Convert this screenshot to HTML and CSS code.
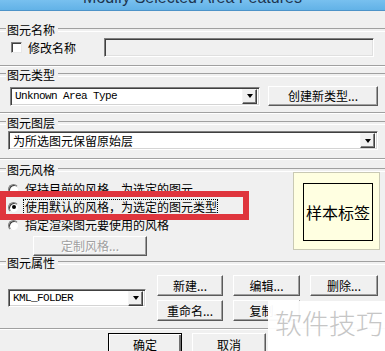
FILE: index.html
```html
<!DOCTYPE html>
<html>
<head>
<meta charset="utf-8">
<link rel="stylesheet" href="styles.css">
</head>
<body>
<div class="titlebar"><span class="title">Modify Selected Area Features</span></div>

<section class="group boxed g1">
  <div class="ghead"><span>图元名称</span></div>
  <div class="row name-row">
    <span class="check"><span class="cbox"></span>修改名称</span>
    <div class="textbox"></div>
  </div>
</section>

<section class="group boxed g2">
  <div class="ghead"><span>图元类型</span></div>
  <div class="row type-row">
    <div class="combo mono w-type"><span class="ctext">Unknown Area Type</span><span class="arrow"></span></div>
    <button class="btn w-create">创建新类型...</button>
  </div>
</section>

<section class="group boxed g3">
  <div class="ghead"><span>图元图层</span></div>
  <div class="row layer-row">
    <div class="combo w-layer"><span class="ctext">为所选图元保留原始层</span><span class="arrow"></span></div>
  </div>
</section>

<section class="group g4">
  <div class="ghead"><span>图元风格</span></div>
  <div class="style-body">
    <div class="radios">
      <div class="radio"><span class="rdot"></span><span>保持目前的风格，为选定的图元</span></div>
      <div class="radio"><span class="rdot on"></span><span class="focus">使用默认的风格，为选定的图元类型</span></div>
      <div class="radio"><span class="rdot"></span><span>指定渲染图元要使用的风格</span></div>
      <button class="btn disabled w-custom">定制风格...</button>
    </div>
    <div class="sample"><div class="sample-in">样本标签</div></div>
  </div>
</section>

<section class="group boxed g5">
  <div class="ghead"><span>图元属性</span></div>
  <div class="attr-body">
    <div class="combo mono w-kml"><span class="ctext">KML_FOLDER</span><span class="arrow"></span></div>
    <div class="btn-grid">
      <button class="btn">新建...</button>
      <button class="btn">编辑...</button>
      <button class="btn">删除...</button>
      <button class="btn">重命名...</button>
      <button class="btn">复制...</button>
    </div>
  </div>
</section>

<div class="footer">
  <button class="btn default w-ok">确定</button>
  <button class="btn w-ok">取消</button>
</div>

<div class="highlight"></div>
<div class="watermark">软件技巧</div>
</body>
</html>
```

FILE: styles.css
```css
* { box-sizing: border-box; }

body {
  margin: 0;
  width: 385px;
  height: 351px;
  overflow: hidden;
  position: relative;
  background: #f0f0f0;
  color: #000;
  font-family: "Noto Sans CJK SC", "Noto Sans", sans-serif;
  font-size: 12px;
}

.titlebar {
  height: 11px;
  background: linear-gradient(#78c0ef, #62b2e7);
  border-bottom: 1px solid #4d93c8;
  overflow: hidden;
  display: flex;
  justify-content: center;
}

.title {
  font-family: "Liberation Sans", sans-serif;
  font-size: 16px;
  line-height: 16px;
  margin-top: -10px;
  color: #1d3550;
  white-space: nowrap;
}

.group.boxed {
  border-bottom: 1px solid #a0a0a0;
  box-shadow: 0 1px 0 #ffffff;
}

.ghead {
  display: flex;
  align-items: center;
  height: 14px;
  line-height: 14px;
  white-space: nowrap;
}

.ghead::before,
.ghead::after {
  content: "";
  height: 2px;
  border-top: 1px solid #a0a0a0;
  border-bottom: 1px solid #ffffff;
}

.ghead::before { width: 6px; margin-right: 1px; }
.ghead::after { flex: 1; margin-left: 3px; }

.g1 { margin-top: 12px; padding-bottom: 8px; }
.g2 { margin-top: 2px; padding-bottom: 6px; }
.g3 { margin-top: 3px; padding-bottom: 8px; }
.g4 { margin-top: 4px; }
.g5 { padding-bottom: 7px; }

.row { display: flex; align-items: center; }

.name-row { margin-top: 1px; height: 19px; padding-left: 11px; }

.check { display: flex; align-items: center; gap: 6px; line-height: 14px; }

.cbox {
  width: 11px;
  height: 11px;
  background: #fff;
  border: 1px solid;
  border-color: #808080 #e8e8e8 #e8e8e8 #808080;
  box-shadow: inset 1px 1px 0 #404040;
}

.textbox {
  margin-left: auto;
  margin-right: 11px;
  width: 270px;
  height: 19px;
  background: #f0f0f0;
  border: 1px solid;
  border-color: #808080 #ffffff #ffffff #808080;
  box-shadow: inset 1px 1px 0 #404040, inset -1px -1px 0 #e0e0e0;
}

.type-row { margin-top: 4px; height: 20px; padding-left: 10px; gap: 8px; }
.layer-row { margin-top: 1px; height: 19px; padding-left: 8px; }

.combo {
  display: flex;
  align-items: center;
  height: 19px;
  background: #fff;
  border: 1px solid;
  border-color: #808080 #ffffff #ffffff #808080;
  box-shadow: inset 1px 1px 0 #404040, inset -1px -1px 0 #d4d4d4;
  padding: 1px 2px 1px 2px;
}

.ctext { flex: 1; padding-left: 2px; line-height: 15px; white-space: nowrap; }

.mono .ctext {
  font-family: "Liberation Mono", monospace;
  font-size: 11px;
  letter-spacing: -0.6px;
}

.arrow {
  width: 15px;
  height: 15px;
  background: #f0f0f0;
  border: 1px solid;
  border-color: #f4f4f4 #404040 #404040 #f4f4f4;
  box-shadow: inset -1px -1px 0 #808080;
  display: flex;
  align-items: center;
  justify-content: center;
}

.arrow::after {
  content: "";
  border-left: 3.5px solid transparent;
  border-right: 3.5px solid transparent;
  border-top: 4px solid #000;
}

.w-type { width: 250px; }
.w-layer { width: 370px; }
.w-kml { width: 138px; height: 18px; }

.btn {
  font-family: inherit;
  font-size: 12px;
  line-height: 14px;
  color: #000;
  background: #f0f0f0;
  border: 1px solid;
  border-color: #ffffff #5a5a5a #5a5a5a #ffffff;
  box-shadow: inset -1px -1px 0 #a0a0a0;
  padding: 0;
  margin: 0;
  height: 21px;
}

.w-create { width: 110px; height: 20px; }

.btn.disabled {
  color: #a0a0a0;
  text-shadow: 1px 1px 0 #ffffff;
}

.style-body { display: flex; align-items: flex-start; }

.radios {
  width: 250px;
  margin-top: 3px;
  display: flex;
  flex-direction: column;
}

.radio {
  height: 18px;
  display: flex;
  align-items: center;
  gap: 6px;
  padding-left: 8px;
  line-height: 14px;
  white-space: nowrap;
}

.rdot {
  width: 11px;
  height: 11px;
  border-radius: 50%;
  background: #fff;
  border: 1px solid;
  border-color: #808080 #f0f0f0 #f0f0f0 #808080;
  box-shadow: inset 1px 1px 0 #404040;
  display: flex;
  align-items: center;
  justify-content: center;
}

.rdot.on::after {
  content: "";
  width: 4px;
  height: 4px;
  border-radius: 50%;
  background: #000;
}

.focus { outline: 1px dotted #000; outline-offset: 0; margin-left: -1px; padding-left: 1px; }

.w-custom { width: 114px; height: 20px; margin: 2px 0 0 33px; }

.sample {
  margin-left: 43px;
  margin-top: -5px;
  width: 87px;
  height: 78px;
  background: #ffffe1;
  border: 1px solid #c9c9b4;
  padding: 10px 6px 8px 9px;
}

.sample-in {
  width: 100%;
  height: 100%;
  border: 1px solid #000;
  display: flex;
  align-items: center;
  justify-content: center;
  font-size: 16px;
  white-space: nowrap;
}

.attr-body {
  margin-top: 5px;
  display: flex;
  align-items: center;
  padding-left: 8px;
}

.btn-grid {
  margin-left: 11px;
  display: grid;
  grid-template-columns: 66px 67px 68px;
  column-gap: 10px;
  row-gap: 4px;
}

.footer {
  margin-top: 4px;
  display: flex;
  gap: 10px;
  padding-left: 108px;
}

.w-ok { width: 74px; height: 23px; }

.btn.default {
  border-color: #000;
  box-shadow: inset 1px 1px 0 #ffffff, inset -2px -2px 0 #707070;
}

.highlight {
  position: absolute;
  left: 0;
  top: 191px;
  width: 249px;
  height: 29px;
  border: 6px solid #df353d;
}

.watermark {
  position: absolute;
  left: 268px;
  top: 301px;
  right: 0;
  bottom: 0;
  background: rgba(255, 255, 255, 0.96);
  color: #c6c6c6;
  font-size: 27px;
  line-height: 36px;
  padding-left: 7px;
  padding-top: 4px;
  white-space: nowrap;
  font-weight: 300;
}
```
